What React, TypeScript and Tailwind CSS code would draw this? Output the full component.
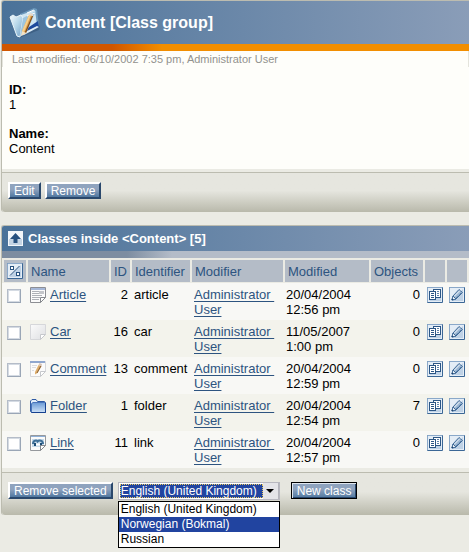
import { useState, type ReactNode } from "react";

type ClassIcon = "article" | "car" | "comment" | "folder" | "link";

interface ContentClass {
  id: number;
  name: string;
  identifier: string;
  date: string;
  time: string;
  objects: number;
  icon: ClassIcon;
}

const classes: ContentClass[] = [
  { id: 2, name: "Article", identifier: "article", date: "20/04/2004", time: "12:56 pm", objects: 0, icon: "article" },
  { id: 16, name: "Car", identifier: "car", date: "11/05/2007", time: "1:00 pm", objects: 0, icon: "car" },
  { id: 13, name: "Comment", identifier: "comment", date: "20/04/2004", time: "12:59 pm", objects: 0, icon: "comment" },
  { id: 1, name: "Folder", identifier: "folder", date: "20/04/2004", time: "12:54 pm", objects: 7, icon: "folder" },
  { id: 11, name: "Link", identifier: "link", date: "20/04/2004", time: "12:57 pm", objects: 0, icon: "link" },
];

const languages = ["English (United Kingdom)", "Norwegian (Bokmal)", "Russian"];

function GroupIcon() {
  return (
    <svg width="32" height="32" viewBox="0 0 32 32" aria-hidden="true" className="shrink-0">
      <defs>
        <linearGradient id="groupFolder" x1="0" y1="0" x2="1" y2="1">
          <stop offset="0" stopColor="#f4fbfe" />
          <stop offset="0.5" stopColor="#b4d5e8" />
          <stop offset="1" stopColor="#6f9cc4" />
        </linearGradient>
      </defs>
      <path d="M10 31L30 23L31 19L12 27Z" fill="#2d4c6e" opacity="0.5" />
      <path d="M11 7L25 1L28 2L30 19L11 29Z" fill="#6d9abd" />
      <path d="M12 8L26 3L28 18L13 27Z" fill="#cfe6f2" />
      <path d="M17 22L29 14L30 20L12 29Z" fill="#1e4a9c" />
      <path d="M1 10L4 8L7 10L12 8L14 11L11 30L8 29Z" fill="url(#groupFolder)" stroke="#e8f4fa" strokeWidth="1" />
      <path d="M11 29L14 11L27 4L18 24Z" fill="#9ec6df" />
      <path d="M11 29L18 24L28 19L30 20L15 28Z" fill="#dfeef6" />
      <path d="M18 6L25 3M18 9L26 6" stroke="#ffffff" strokeWidth="1" />
      <path d="M20 8L24 9L17 26L13 28L13 24Z" fill="#dca050" />
      <path d="M20 8L22 8L15 25L13 24Z" fill="#f6d08c" />
      <path d="M24 9L17 26L16 25L23 9Z" fill="#7a4a1c" />
      <path d="M20 8L21 6L24 7L24 9Z" fill="#e8d8c8" />
      <path d="M13 24L17 26L12 29Z" fill="#f4e2c4" />
    </svg>
  );
}

function RowIcon({ kind }: { kind: ClassIcon }) {
  if (kind === "folder") {
    return (
      <svg width="16" height="16" viewBox="0 0 16 16" aria-hidden="true">
        <defs>
          <linearGradient id="folderFace" x1="0" y1="0" x2="0" y2="1">
            <stop offset="0" stopColor="#6f9ed8" />
            <stop offset="1" stopColor="#c9def5" />
          </linearGradient>
        </defs>
        <path d="M0.5 3L2 1.5H6L7.5 3.5H14.5L15.5 4.5V14.5H1.5L0.5 13.5Z" fill="#e4effb" stroke="#2f5ba4" />
        <path d="M2 5H15V14H2Z" fill="url(#folderFace)" />
        <path d="M1.5 14.5V5.5L3 4.5H15" fill="none" stroke="#4a76bb" />
        <path d="M1.5 14.5H15.5V5" fill="none" stroke="#15418f" />
      </svg>
    );
  }
  const faint = kind === "comment" || kind === "car";
  return (
    <svg width="16" height="16" viewBox="0 0 16 16" aria-hidden="true">
      <defs>
        <linearGradient id="blankSheet" x1="0" y1="0" x2="1" y2="1">
          <stop offset="0" stopColor="#fbfbfb" />
          <stop offset="1" stopColor="#dedfe2" />
        </linearGradient>
      </defs>
      <path
        d="M0.5 0.5H15.5V10.5L10.5 15.5H0.5Z"
        fill={kind === "car" ? "url(#blankSheet)" : "#fbfbfb"}
        stroke={kind === "article" ? "#8d8f94" : kind === "link" ? "#96999d" : "#d6d7da"}
      />
      {kind === "article" && (
        <>
          <path d="M1 2H15" stroke="#a6b8d8" strokeWidth="2" />
          <path d="M2 4.5H14M2 6.5H14M2 8.5H12M2 10.5H10M2 12.5H9" stroke="#aeb1b7" />
          <path d="M9 4H14V7H9Z" fill="#c4c6ca" />
        </>
      )}
      {kind === "comment" && (
        <>
          <path d="M0 1H15" stroke="#8fa7cf" strokeWidth="2" />
          <path d="M2 4.5H7M2 6.5H6M2 9.5H4" stroke="#dcdde0" />
          <path d="M8.5 4L11.5 5L7.5 12L5 13.5V11Z" fill="#dfae6c" />
          <path d="M11.5 5L7.5 12L6.5 12L10.5 4.5Z" fill="#8a6238" />
          <path d="M8.5 4L9.5 2L12 3L11.5 5Z" fill="#d8c4b8" />
        </>
      )}
      {kind === "link" && (
        <>
          <path d="M1 1.5H15" stroke="#8fb0d8" />
          <path d="M2 4H14V12H2Z" fill="#c6daea" />
          <path d="M3 9C3 5 7 5 7.5 6.5C9 5 13 5 13 9" fill="none" stroke="#3f7098" strokeWidth="2" />
          <path d="M4 8H6V11H4ZM10 8H12V11H10Z" fill="#1d4c75" />
          <path d="M6 9.5H10" stroke="#ffffff" strokeWidth="2" />
        </>
      )}
      <path d="M10.5 15.5V10.5H15.5Z" fill="#ffffff" stroke={faint ? "#c6c8cc" : "#85888d"} />
    </svg>
  );
}

function ToolFrame({ children }: { children: ReactNode }) {
  return (
    <svg width="16" height="16" viewBox="0 0 16 16" aria-hidden="true">
      <rect width="16" height="16" rx="1" fill="#3b6796" />
      <path d="M0 1Q0 0 1 0H15V1H1V15H0Z" fill="#8aa8c9" />
      <path d="M1 1H15V15H1Z" fill="#e4edf6" />
      <path d="M2 14L14 2V14Z" fill="#bfd2e6" />
      {children}
    </svg>
  );
}

function InvertIcon() {
  return (
    <ToolFrame>
      <path d="M3 12.5L12.5 3" stroke="#27517f" />
      <rect x="3.5" y="3.5" width="3" height="3" fill="#ffffff" stroke="#27517f" />
      <rect x="9.5" y="9.5" width="3" height="3" fill="#ffffff" stroke="#27517f" />
    </ToolFrame>
  );
}

function CopyIcon() {
  return (
    <ToolFrame>
      <rect x="6.5" y="2.5" width="7" height="8" fill="#ffffff" stroke="#2c5685" />
      <path d="M10 4.5H12M10 6.5H12M10 8.5H12" stroke="#5c80a8" />
      <rect x="2.5" y="4.5" width="6" height="8" fill="#ffffff" stroke="#2c5685" />
      <path d="M4 6.5H7M4 8.5H7M4 10.5H7" stroke="#2c5685" />
    </ToolFrame>
  );
}

function EditIcon() {
  return (
    <ToolFrame>
      <path d="M3 13L4 9L10 2.5L13.5 5.5L7 12Z" fill="#9db8d4" stroke="#416b98" />
      <path d="M5 9.5L11 3.5" stroke="#f2f7fb" />
      <path d="M7 11L12.5 5.5" stroke="#416b98" strokeDasharray="1 1" />
      <path d="M4 9L7 12L3 13Z" fill="#f4f8fc" stroke="#416b98" />
      <path d="M3 11.5L4.5 13H2.5Z" fill="#1c3f68" />
    </ToolFrame>
  );
}

function UpIcon() {
  return (
    <svg width="15" height="15" viewBox="0 0 15 15" aria-hidden="true">
      <rect width="15" height="15" fill="#f2f6fa" />
      <path d="M1 8H14V14H1Z" fill="#c4d4e4" />
      <path d="M7.5 2L13 8H9.5V12H5.5V8H2Z" fill="#27517f" />
    </svg>
  );
}

function ActionButton({ children, focused = false }: { children: ReactNode; focused?: boolean }) {
  const edge = focused
    ? "border border-black px-[5px] pt-0.5 shadow-[inset_1px_1px_0_#dfe6ee,inset_-1px_-1px_0_#27456b]"
    : "border-2 border-t-white border-l-white border-r-[#2a486c] border-b-[#2a486c] px-1 pt-px";
  return (
    <button
      type="button"
      className={`flex h-[17px] items-center bg-linear-to-b from-[#8fa3be] from-40% to-[#5078a0] text-[12px] leading-[13px] whitespace-nowrap text-white ${edge}`}
    >
      {children}
    </button>
  );
}

function PanelFooter({ children, size }: { children: ReactNode; size: string }) {
  return (
    <div className="border-t-[3px] border-[#ebebe4]">
      <div
        className={`flex items-start rounded-bl-[3px] border-t border-[#bcbcb0] bg-linear-to-b from-[#e6e6df] from-45% to-[#b9b9ab] px-1.5 pt-[9px] ${size}`}
      >
        {children}
      </div>
    </div>
  );
}

function LanguageSelect() {
  const [language, setLanguage] = useState(languages[0]);
  const highlighted = languages[1];
  return (
    <div className="relative h-[18px] w-[162px] border border-[#b8b8c0] bg-white">
      <select
        aria-label="Language"
        value={language}
        onChange={(event) => setLanguage(event.target.value)}
        className="block h-4 w-[145px] appearance-none bg-[#2144a0] pl-0.5 text-[12px] leading-4 text-white shadow-[inset_0_0_0_1px_#ffffff] outline-1 -outline-offset-2 outline-[#e8c860] outline-dotted"
      >
        {languages.map((item) => (
          <option key={item}>{item}</option>
        ))}
      </select>
      <span className="pointer-events-none absolute inset-y-0 right-0 flex w-4 items-center justify-center border-r border-[#b4b4bc] bg-[#e4e4e8]">
        <svg width="8" height="4" viewBox="0 0 8 4" aria-hidden="true">
          <path d="M0 0H8L4 4Z" fill="#000000" />
        </svg>
      </span>
      <ul
        role="listbox"
        aria-label="Language"
        className="absolute top-[18px] -left-px w-[162px] border border-black bg-white text-[12px] leading-[15px] text-black"
      >
        {languages.map((item) => (
          <li
            key={item}
            role="option"
            aria-selected={item === highlighted}
            className={`pl-0.5 ${item === highlighted ? "bg-[#2144a0] text-white" : ""}`}
          >
            {item}
          </li>
        ))}
      </ul>
    </div>
  );
}

const linkStyle = "text-[#2d5480] underline underline-offset-2 [text-decoration-skip-ink:none]";
const headStyle =
  "h-[25px] border-t-2 border-b border-l-2 border-[#ebebe4] bg-[#b4bcc7] bg-clip-padding pl-[3px] text-left font-normal text-[#2d5480]";

export default function App() {
  return (
    <main className="min-h-screen bg-[#ebebe4] pl-px font-['Liberation_Sans',Arial,sans-serif] text-[13px] leading-[15px] text-black">
      <section className="rounded-l-[3px] border-t border-l border-[#bcbcb0] bg-[#fefefa]">
        <header className="flex h-[43px] items-center gap-1 rounded-tl-[2px] bg-linear-to-r from-[#4a7299] to-[#8a9db8] pl-[7px]">
          <GroupIcon />
          <h1 className="text-[16px] leading-5 font-bold text-white">Content [Class group]</h1>
        </header>
        <div className="h-[7px] bg-[linear-gradient(to_right,#d05600_110px,#f28e00_160px)]" />
        <p className="border-x border-[#e4e4dc] pl-[9px] text-[11px] leading-4 text-[#92928e]">
          Last modified: 06/10/2002 7:35 pm, Administrator User
        </p>
        <dl className="pt-[15px] pb-[13px] pl-[7px]">
          <dt className="font-bold">ID:</dt>
          <dd>1</dd>
          <dt className="pt-3.5 font-bold">Name:</dt>
          <dd>Content</dd>
        </dl>
        <PanelFooter size="h-10 gap-1">
          <ActionButton>Edit</ActionButton>
          <ActionButton>Remove</ActionButton>
        </PanelFooter>
      </section>

      <section className="mt-[13px] rounded-l-[3px] border-t border-l border-[#bcbcb0] bg-[#f8f8f5]">
        <header className="flex h-[25px] items-center gap-[5px] rounded-tl-[2px] bg-linear-to-r from-[#4a7299] to-[#8a9db8] pl-1.5">
          <a href="#up" aria-label="Up one level">
            <UpIcon />
          </a>
          <h2 className="text-[13px] font-bold text-white">Classes inside &lt;Content&gt; [5]</h2>
        </header>
        <div className="h-[7px] bg-[linear-gradient(to_right,#7d8da1_125px,#b4bcc8_170px)]" />
        <table className="w-full table-fixed border-separate border-spacing-0 border-b border-[#ebebe4]">
          <colgroup>
            <col className="w-6" />
            <col className="w-[83px]" />
            <col className="w-[21px]" />
            <col className="w-[60px]" />
            <col />
            <col className="w-[86px]" />
            <col className="w-[54px]" />
            <col className="w-[22px]" />
            <col className="w-[24px]" />
          </colgroup>
          <thead>
            <tr>
              <th className={headStyle}>
                <button type="button" aria-label="Invert selection" className="block">
                  <InvertIcon />
                </button>
              </th>
              <th className={headStyle}>Name</th>
              <th className={headStyle}>ID</th>
              <th className={headStyle}>Identifier</th>
              <th className={headStyle}>Modifier</th>
              <th className={headStyle}>Modified</th>
              <th className={headStyle}>Objects</th>
              <th className={headStyle} />
              <th className={`${headStyle} border-r-2`} />
            </tr>
          </thead>
          <tbody>
            {classes.map((item) => (
              <tr key={item.id} className="align-top odd:bg-[#f8f8f5] even:bg-[#f3f3ec] [&>td]:pt-1 [&>td]:pb-[3px]">
                <td className="pl-[5px]">
                  <input
                    type="checkbox"
                    aria-label={`Select ${item.name}`}
                    className="mt-0.5 block size-3.5 appearance-none border border-t-[#b4bcc8] border-r-[#9aa6b6] border-b-[#9aa6b6] border-l-[#b4bcc8] bg-white shadow-[inset_0_0_0_1px_#d5dbe3]"
                  />
                </td>
                <td className="pl-1">
                  <div className="flex gap-1">
                    <RowIcon kind={item.icon} />
                    <a href={`#${item.identifier}`} className={linkStyle}>
                      {item.name}
                    </a>
                  </div>
                </td>
                <td className="pr-0.5 text-right">{item.id}</td>
                <td className="pl-1">{item.identifier}</td>
                <td className="pl-1">
                  <a href="#administrator" className={linkStyle}>
                    {"Administrator\u00a0 User"}
                  </a>
                </td>
                <td className="pl-[3px]">
                  {item.date}
                  <br />
                  {item.time}
                </td>
                <td className="pr-[3px] text-right">{item.objects}</td>
                <td className="pl-1">
                  <button type="button" aria-label={`Copy ${item.name}`} className="block">
                    <CopyIcon />
                  </button>
                </td>
                <td className="pl-1">
                  <button type="button" aria-label={`Edit ${item.name}`} className="block">
                    <EditIcon />
                  </button>
                </td>
              </tr>
            ))}
          </tbody>
        </table>
        <PanelFooter size="h-[43px] gap-[5px]">
          <ActionButton>Remove selected</ActionButton>
          <LanguageSelect />
          <div className="ml-1.5">
            <ActionButton focused>New class</ActionButton>
          </div>
        </PanelFooter>
      </section>
    </main>
  );
}
